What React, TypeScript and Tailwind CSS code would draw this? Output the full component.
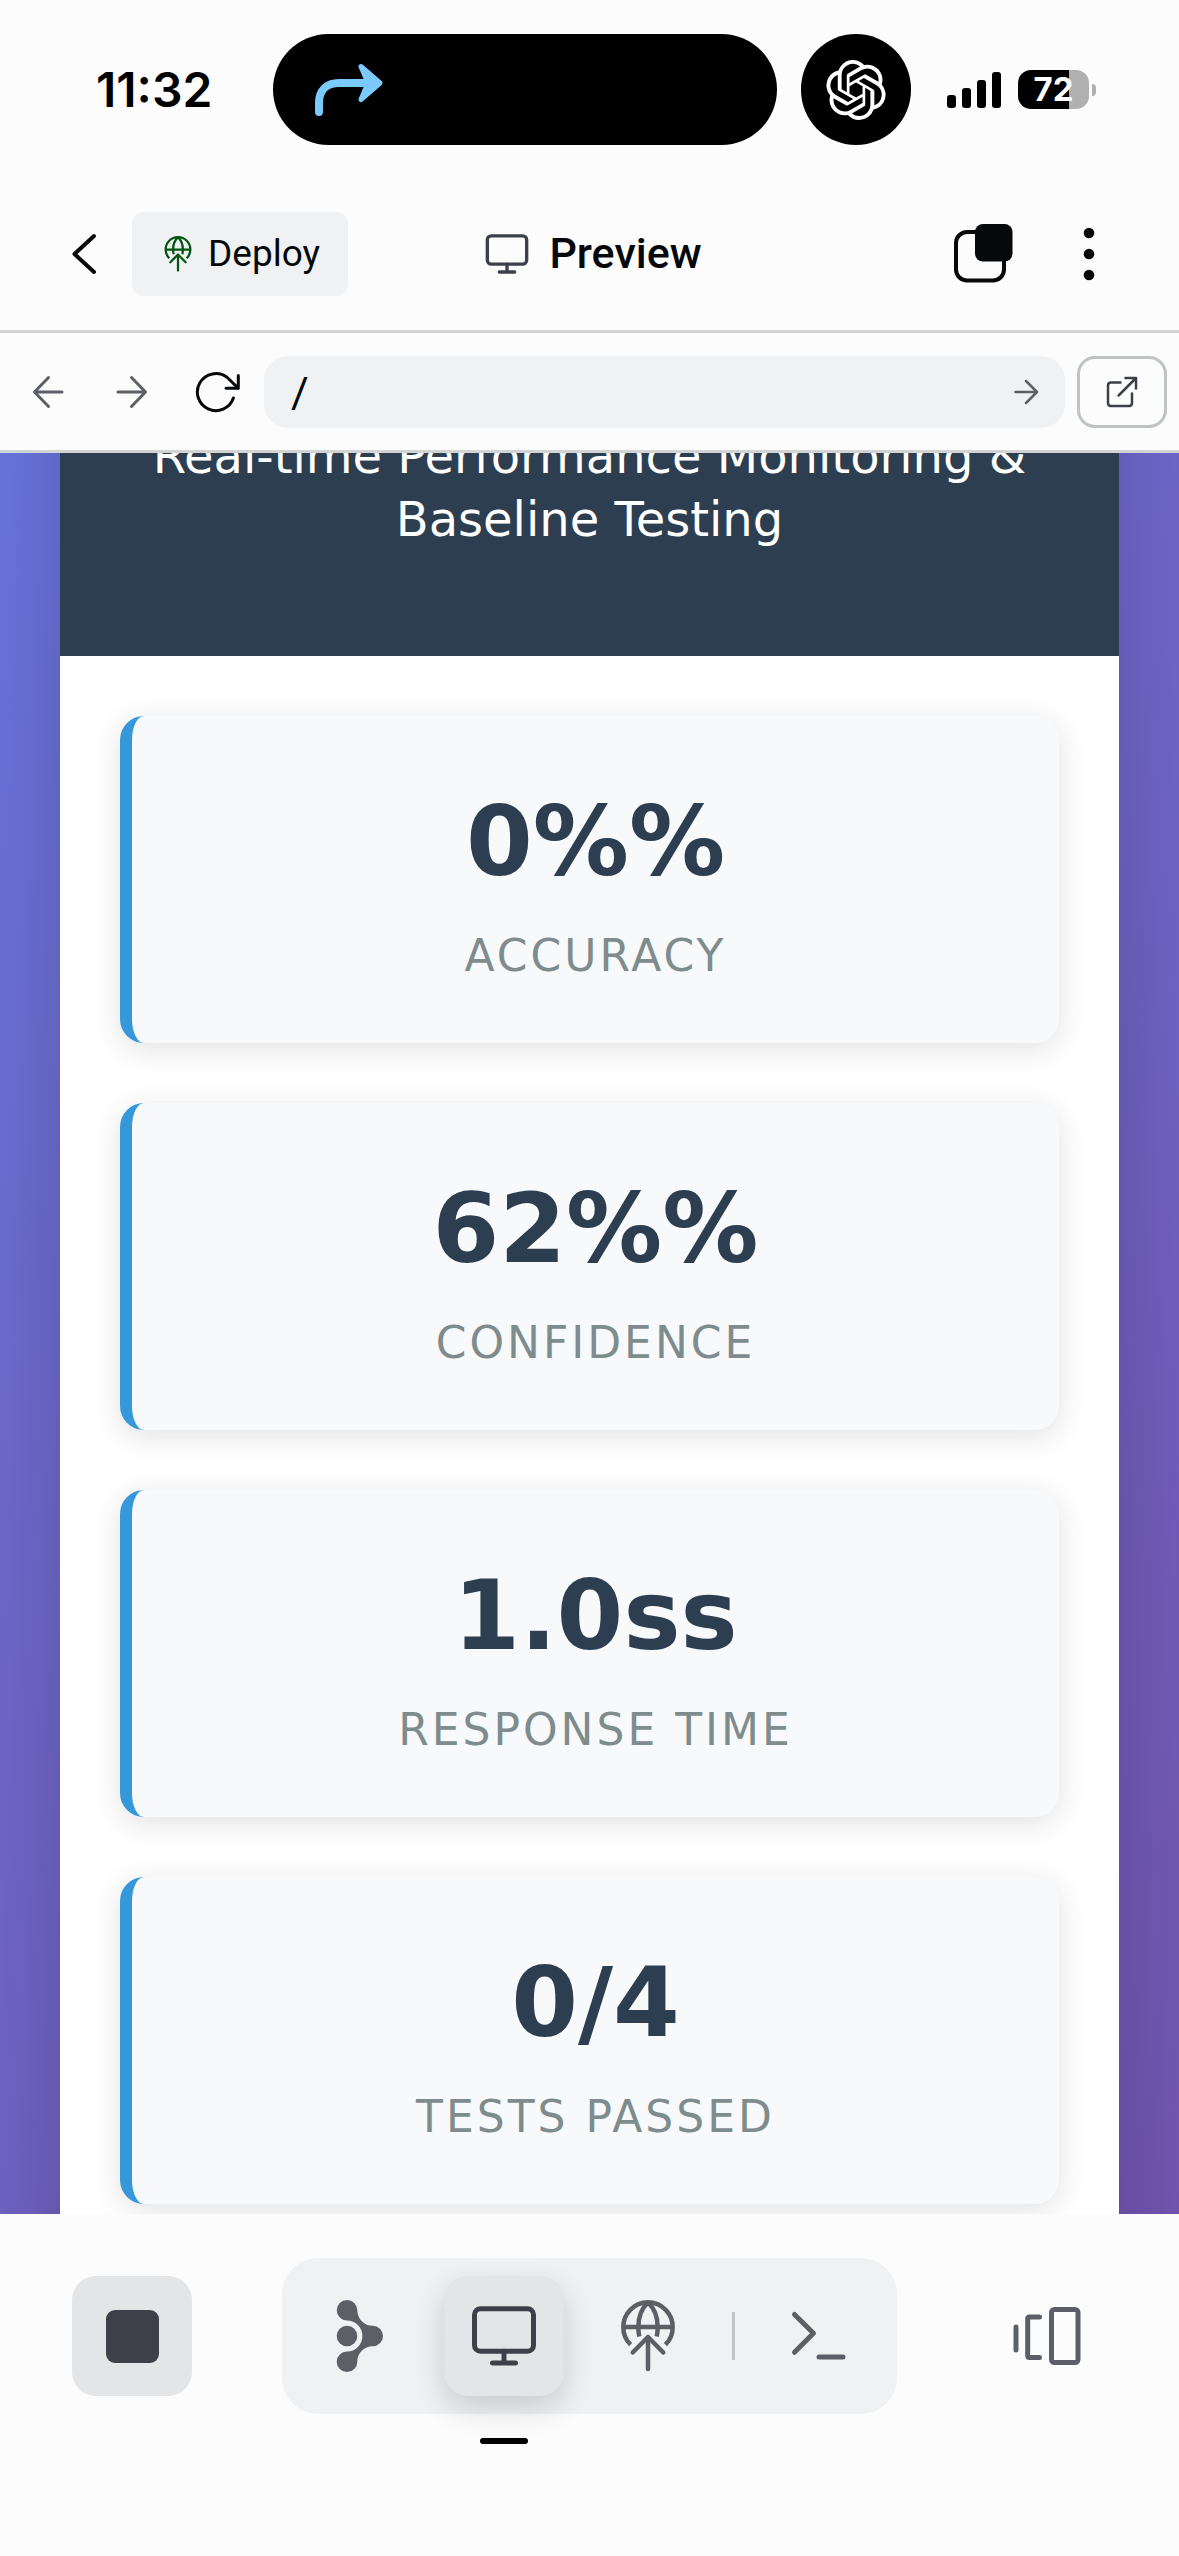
import React, { type ReactNode } from "react";
import { SiOpenai } from "react-icons/si";

const metrics = [
  { value: "0%%", label: "Accuracy" },
  { value: "62%%", label: "Confidence" },
  { value: "1.0ss", label: "Response Time" },
  { value: "0/4", label: "Tests Passed" },
];

type IconProps = { box: number; className: string; width?: number; children: ReactNode };

function Icon({ box, className, width = 5, children }: IconProps) {
  return (
    <svg
      viewBox={`0 0 ${box} ${box}`}
      className={className}
      fill="none"
      stroke="currentColor"
      strokeWidth={width}
      strokeLinecap="round"
      strokeLinejoin="round"
      aria-hidden="true"
    >
      {children}
    </svg>
  );
}

function MonitorIcon({ className }: { className: string }) {
  return (
    <Icon box={72} className={className}>
      <rect x="6.5" y="8.8" width="59" height="42.4" rx="6" />
      <path d="M36 51.2V63M24.5 63H47.5" />
    </Icon>
  );
}

function DeployIcon({ className }: { className: string }) {
  return (
    <Icon box={72} className={className} width={4.5}>
      <g strokeLinecap="butt">
        <path d="M18.6 44.6A24.7 24.7 0 1 1 53.4 44.6M11.3 27H60.7" />
        <path d="M36 2.3C30 8 26.3 17 26.3 27C26.3 30.5 26.6 33.5 27.3 36.5M36 2.3C42 8 45.7 17 45.7 27C45.7 30.5 45.4 33.5 44.7 36.5" />
      </g>
      <path d="M36 37.5V69M20.7 52.5L36 37L51.3 52.5" />
    </Icon>
  );
}

function AgentIcon() {
  return (
    <svg viewBox="0 0 72 72" className="size-18" fill="currentColor" aria-hidden="true">
      <path d="M23 0A10.3 10.3 0 0 1 33.3 10.3A15.4 15.4 0 0 0 48.7 25.7A10.3 10.3 0 0 1 48.7 46.3A15.4 15.4 0 0 0 33.3 61.7A10.3 10.3 0 1 1 23 51.4A15.4 15.4 0 0 0 23 20.6A10.3 10.3 0 1 1 23 0Z" />
      <circle cx="23" cy="36" r="10.3" />
    </svg>
  );
}

function StatusBar() {
  return (
    <div className="flex items-center pt-[34px] pr-[83px] pb-8 pl-24">
      <time className="w-[177px] text-[48px] leading-none font-semibold text-black">11:32</time>
      <div className="flex h-[111px] flex-1 items-center rounded-full bg-black pl-9 text-[#7bcafe]">
        <svg viewBox="0 0 78 60" className="h-[60px] w-[78px]" fill="none" stroke="currentColor" strokeLinecap="round" strokeLinejoin="round" aria-hidden="true">
          <path d="M10 52V43C10 30 18 23 30 23H64" strokeWidth="8" />
          <path d="M52 6.5L71 23L52 39.5L59 23Z" fill="currentColor" strokeWidth="5" />
        </svg>
      </div>
      <div className="ml-6 flex h-[111px] w-[110px] items-center justify-center rounded-full bg-black text-white">
        <SiOpenai className="size-[60px]" aria-hidden="true" />
      </div>
      <div className="ml-9 flex h-9 items-end gap-[6px]" role="img" aria-label="Signal strength">
        <span className="h-[13px] w-[9px] rounded-[3px] bg-black" />
        <span className="h-5 w-[9px] rounded-[3px] bg-black" />
        <span className="h-7 w-[9px] rounded-[3px] bg-black" />
        <span className="h-9 w-[9px] rounded-[3px] bg-black" />
      </div>
      <div className="ml-[17px] flex items-center gap-[3px]">
        <div className="flex h-[39px] w-[71px] items-center justify-center rounded-[13px] bg-linear-to-r from-black from-72% to-[#b0b0b0] to-72% text-[33px] leading-none font-bold text-white">
          72
        </div>
        <span className="h-3 w-1 rounded-r-full bg-[#b0b0b0]" />
      </div>
    </div>
  );
}

function NavBar() {
  return (
    <header className="grid h-[156px] grid-cols-[1fr_auto_1fr] items-center border-b-[3px] border-[#d2d4d4] pr-[54px] pl-[60px] font-[Roboto,sans-serif] text-[#07080a]">
      <div className="flex items-center gap-6">
        <button type="button" aria-label="Back">
          <Icon box={48} className="size-12" width={4}>
            <path d="M34 6L14.5 24L34 42" />
          </Icon>
        </button>
        <button type="button" className="flex h-[84px] items-center gap-3 rounded-xl bg-[#f0f1f3] px-7 text-[37px]">
          <DeployIcon className="size-9 text-[#00560f]" />
          Deploy
        </button>
      </div>
      <h1 className="flex items-center gap-[18px] text-[43px] font-medium">
        <MonitorIcon className="size-12 text-[#3d4048]" />
        Preview
      </h1>
      <div className="flex items-center justify-end gap-[33px]">
        <button type="button" aria-label="Tabs">
          <Icon box={72} className="size-18" width={4}>
            <rect x="8" y="14" width="48" height="48.5" rx="11" />
            <rect x="27" y="6" width="37.5" height="37.5" rx="8" fill="currentColor" stroke="none" />
          </Icon>
        </button>
        <button type="button" aria-label="More options">
          <svg viewBox="0 0 72 72" className="size-18" fill="currentColor" aria-hidden="true">
            <circle cx="36" cy="15" r="5.3" />
            <circle cx="36" cy="36" r="5.3" />
            <circle cx="36" cy="57" r="5.3" />
          </svg>
        </button>
      </div>
    </header>
  );
}

function AddressBar() {
  return (
    <form
      className="flex h-[120px] items-center border-b-[3px] border-[#d2d4d4] pr-3 pl-6 font-[Roboto,sans-serif] text-[#5c5f66]"
      onSubmit={(event) => event.preventDefault()}
    >
      <div className="flex items-center gap-9">
        <button type="button" aria-label="Go back">
          <Icon box={48} className="size-12" width={3}>
            <path d="M38 24H10.5M24.5 9.5L10.5 24L24.5 38.5" />
          </Icon>
        </button>
        <button type="button" aria-label="Go forward">
          <Icon box={48} className="size-12" width={3}>
            <path d="M10 24H37.5M23.5 9.5L37.5 24L23.5 38.5" />
          </Icon>
        </button>
        <button type="button" aria-label="Reload" className="text-[#07080a]">
          <Icon box={48} className="size-12" width={3}>
            <path d="M41.4 30A18.5 18.5 0 1 1 35 9.3L46.3 20.3M46.3 7.5V20.3H34" />
          </Icon>
        </button>
      </div>
      <div className="ml-6 flex h-[72px] flex-1 items-center rounded-3xl bg-[#f0f1f3] pr-[21px] pl-[27px]">
        <input
          type="text"
          aria-label="Page address"
          defaultValue="/"
          className="h-full min-w-0 flex-1 bg-transparent text-[43px] text-[#07080a] outline-none"
        />
        <button type="submit" aria-label="Go">
          <Icon box={36} className="size-9" width={2.5}>
            <path d="M7.5 18H29M18 7L29 18L18 29" />
          </Icon>
        </button>
      </div>
      <button
        type="button"
        aria-label="Open in new tab"
        className="ml-3 flex h-[72px] w-[90px] items-center justify-center rounded-[18px] border-[3px] border-[#bfc3c3] text-[#3d4048]"
      >
        <Icon box={48} className="size-12" width={2.5}>
          <path d="M22.5 14.5H13Q10 14.5 10 17.5V35Q10 38 13 38H31Q34 38 34 35V25.5" />
          <path d="M20.6 27.5L38 10M27.5 10H38V20.5" />
        </Icon>
      </button>
    </form>
  );
}

function MetricCard({ value, label }: { value: string; label: string }) {
  return (
    <article className="rounded-3xl border-l-[12px] border-[#3498db] bg-[#f8f9fb] pt-[66px] pb-[61px] text-center shadow-[0_6px_30px_rgba(0,0,0,0.12)]">
      <p className="text-[96px] leading-[120px] font-bold text-[#2c3e50]">{value}</p>
      <p className="mt-7 text-[44px] leading-[52px] tracking-[3px] text-[#7f8c8d] uppercase">{label}</p>
    </article>
  );
}

function Dashboard() {
  return (
    <main className="min-h-0 flex-1 overflow-hidden bg-linear-135 from-[#6975de] to-[#7355b0] px-[60px] font-['DejaVu_Sans',Verdana,sans-serif]">
      <div className="-mt-[160px] bg-white pb-[160px] shadow-[0_30px_90px_rgba(0,0,0,0.2)]">
        <div className="bg-[#2c3e50] px-[60px] pt-[132px] pb-[105px] text-center text-[48px] leading-[63px] text-white">
          <p>Real-time Performance Monitoring &amp; Baseline Testing</p>
        </div>
        <section className="flex flex-col gap-[60px] p-[60px]" aria-label="Metrics">
          {metrics.map((metric) => (
            <MetricCard key={metric.label} {...metric} />
          ))}
        </section>
      </div>
    </main>
  );
}

function BottomBar() {
  const tab = "flex size-[120px] items-center justify-center rounded-3xl";
  return (
    <footer className="flex items-center justify-between px-[72px] pt-11 pb-[142px] text-[#5c5f66]">
      <button type="button" aria-label="Stop" className="flex size-[120px] items-center justify-center rounded-3xl bg-[#e4e5e7]">
        <span className="size-[53px] rounded-[9px] bg-[#3d4048]" />
      </button>
      <nav className="flex items-center gap-6 rounded-[36px] bg-[#f0f1f3] p-[18px]" aria-label="Tools">
        <button type="button" aria-label="Agent" className={tab}>
          <AgentIcon />
        </button>
        <button
          type="button"
          aria-label="Preview"
          aria-current="page"
          className="relative flex size-[120px] items-center justify-center rounded-3xl bg-[#e4e5e7] text-[#3d4048] shadow-[0_12px_30px_rgba(0,0,0,0.16)]"
        >
          <MonitorIcon className="size-18" />
          <span className="absolute -bottom-12 left-9 h-[6px] w-12 rounded-full bg-black" />
        </button>
        <button type="button" aria-label="Deployments" className={tab}>
          <DeployIcon className="size-18" />
        </button>
        <span className="h-12 w-[3px] bg-[#c2c4c6]" />
        <button type="button" aria-label="Shell" className={tab}>
          <Icon box={72} className="size-18">
            <path d="M11.5 14.5L30.5 33.3L11.5 52.3M36 57H60" />
          </Icon>
        </button>
      </nav>
      <button type="button" aria-label="Switch tabs" className={tab}>
        <Icon box={72} className="size-18">
          <path d="M5 27V50M28.5 17H18.5Q16.7 17 16.7 19V55.5Q16.7 57.5 18.5 57.5H28.5" />
          <rect x="40.5" y="9.5" width="26.5" height="53" rx="3" />
        </Icon>
      </button>
    </footer>
  );
}

export default function App() {
  return (
    <div className="flex h-screen flex-col bg-[#fcfcfc] font-[Inter,sans-serif]">
      <StatusBar />
      <NavBar />
      <AddressBar />
      <Dashboard />
      <BottomBar />
    </div>
  );
}
